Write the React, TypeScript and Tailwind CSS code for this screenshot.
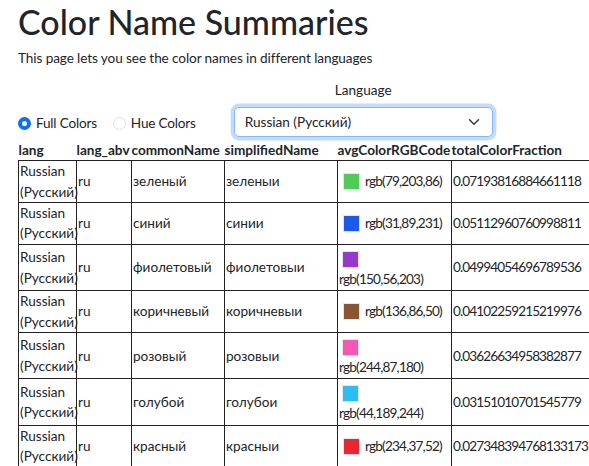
import { useState } from "react";

interface ColorRow {
    common: string;
    simplified: string;
    rgb: [number, number, number];
    fraction: string;
    wrap?: boolean; // swatch sits on its own line in the reference
}

const rows: ColorRow[] = [
    { common: "зеленый", simplified: "зеленыи", rgb: [79, 203, 86], fraction: "0.07193816884661118" },
    { common: "синий", simplified: "синии", rgb: [31, 89, 231], fraction: "0.05112960760998811" },
    { common: "фиолетовый", simplified: "фиолетовыи", rgb: [150, 56, 203], fraction: "0.04994054696789536", wrap: true },
    { common: "коричневый", simplified: "коричневыи", rgb: [136, 86, 50], fraction: "0.04102259215219976" },
    { common: "розовый", simplified: "розовыи", rgb: [244, 87, 180], fraction: "0.03626634958382877", wrap: true },
    { common: "голубой", simplified: "голубои", rgb: [44, 189, 244], fraction: "0.03151010701545779", wrap: true },
    { common: "красный", simplified: "красныи", rgb: [234, 37, 52], fraction: "0.027348394768133173" },
];

const Radio = ({ checked, label, onClick }: { checked: boolean; label: string; onClick: () => void }) => (
    <label className="flex items-center cursor-pointer" onClick={onClick}>
        <span
            className={
                checked
                    ? "w-[13px] h-[13px] rounded-full border-[4px] border-[#0d6efd] bg-white"
                    : "w-[13px] h-[13px] rounded-full border border-[#dee2e6] bg-white"
            }
        />
        <span className="ml-[5px] tracking-[-0.2px]">{label}</span>
    </label>
);

const App = () => {
    const [mode, setMode] = useState("full");

    return (
        <div
            className="min-h-screen bg-white text-[#212529] text-[13.6px] leading-[20.4px] px-[18px] overflow-hidden"
            style={{ fontFamily: "Lato, 'Noto Sans', sans-serif" }}
        >
            <h1 className="text-[34px] leading-[41px] font-medium pt-[1px]">Color Name Summaries</h1>
            <p className="mt-[6px] tracking-[-0.1px]">This page lets you see the color names in different languages</p>

            <div className="flex items-end mt-[12px]">
                <div className="flex items-center gap-[16px] pb-[3px]">
                    <Radio checked={mode === "full"} label="Full Colors" onClick={() => setMode("full")} />
                    <Radio checked={mode === "hue"} label="Hue Colors" onClick={() => setMode("hue")} />
                </div>
                <div className="flex flex-col items-center ml-[38px]">
                    <span className="mb-[6px]">Language</span>
                    <div className="w-[259px] h-[30px] flex items-center justify-between pl-[10px] pr-[12px] border border-[#86b7fe] rounded-[5px] bg-white shadow-[0_0_0_3.4px_rgba(13,110,253,0.25)]">
                        <span>Russian (Русский)</span>
                        <svg width="12" height="12" viewBox="0 0 16 16" fill="none" stroke="#343a40" strokeWidth="2" strokeLinecap="round" strokeLinejoin="round">
                            <path d="M2 5l6 6 6-6" />
                        </svg>
                    </div>
                </div>
            </div>

            <table className="table-fixed border-collapse w-[583px] mt-[3px] text-left">
                <thead>
                    <tr className="font-bold">
                        <th className="w-[58px] font-bold">lang</th>
                        <th className="w-[55px] font-bold">lang_abv</th>
                        <th className="w-[93px] font-bold">commonName</th>
                        <th className="w-[113px] font-bold">simplifiedName</th>
                        <th className="w-[114px] font-bold">avgColorRGBCode</th>
                        <th className="w-[150px] font-bold">totalColorFraction</th>
                    </tr>
                </thead>
                <tbody>
                    {rows.map((r, i) => {
                        const rgb = `rgb(${r.rgb[0]},${r.rgb[1]},${r.rgb[2]})`;
                        return (
                            <tr key={i}>
                                <td className="border border-[#222] px-[1px] align-middle">
                                    Russian
                                    <br />
                                    (Русский)
                                </td>
                                <td className="border border-[#222] px-[1px] align-middle">ru</td>
                                <td className="border border-[#222] px-[1px] align-middle">{r.common}</td>
                                <td className="border border-[#222] px-[1px] align-middle">{r.simplified}</td>
                                <td className="border border-[#222] px-[1px] align-middle">
                                    {r.wrap ? (
                                        <div className="flex flex-col pt-[6px] pb-[1px]">
                                            <span
                                                className="w-[17px] h-[17px] ml-[3px] mb-[1px] border border-[#e5e5e5]"
                                                style={{ backgroundColor: rgb }}
                                            />
                                            <span className="tracking-[-0.8px]">{rgb}</span>
                                        </div>
                                    ) : (
                                        <div className="flex items-center">
                                            <span
                                                className="w-[17px] h-[17px] ml-[4px] mr-[5px] border border-[#e5e5e5]"
                                                style={{ backgroundColor: rgb }}
                                            />
                                            <span className="tracking-[-0.8px]">{rgb}</span>
                                        </div>
                                    )}
                                </td>
                                <td className="border border-[#222] px-[1px] align-middle whitespace-nowrap tracking-[-0.9px]">{r.fraction}</td>
                            </tr>
                        );
                    })}
                </tbody>
            </table>
        </div>
    );
};

export default App;
